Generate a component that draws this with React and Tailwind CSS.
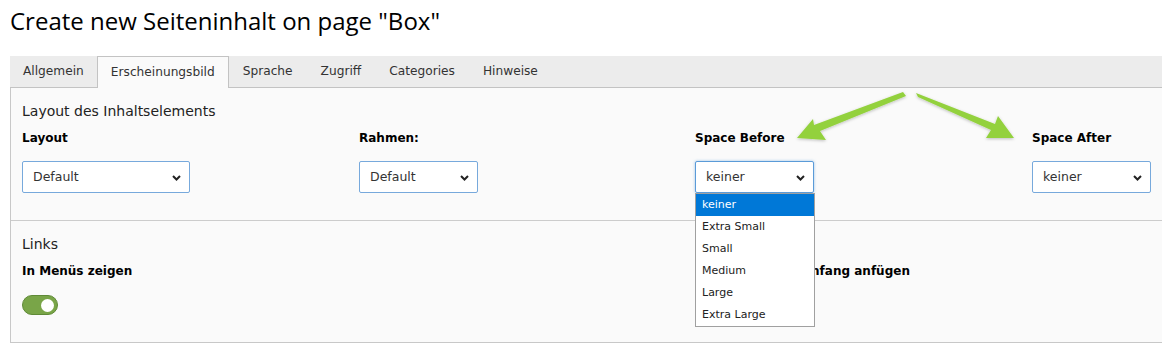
const tabs = ['Allgemein', 'Erscheinungsbild', 'Sprache', 'Zugriff', 'Categories', 'Hinweise']
const options = ['keiner', 'Extra Small', 'Small', 'Medium', 'Large', 'Extra Large']

function Chevron() {
  return (
    <svg width="9" height="6" viewBox="0 0 9 6" className="shrink-0">
      <path d="M1 1l3.5 3.5L8 1" fill="none" stroke="#222" strokeWidth="2" />
    </svg>
  )
}

function SelectBox({ value, width, focused }) {
  return (
    <div
      className={`flex h-[32px] items-center justify-between rounded-[2px] border bg-white pl-[10px] pr-[8px] pt-px text-[12.5px] text-[#333] ${width} ${
        focused ? 'border-[#5b9bd8] shadow-[0_0_3px_rgba(91,155,216,0.6)]' : 'border-[#77a9dc]'
      }`}
    >
      <span>{value}</span>
      <Chevron />
    </div>
  )
}

function Toggle() {
  return (
    <div className="flex h-[20px] w-[36px] items-center justify-end rounded-full border border-[#5f8a37] bg-[#79a548] pr-[3px]">
      <div className="h-[13px] w-[13px] rounded-full bg-white" />
    </div>
  )
}

function Field({ label, children }) {
  return (
    <div>
      <div className="text-[12px] font-bold leading-[16px] text-black">{label}</div>
      <div className="mt-[15px]">{children}</div>
    </div>
  )
}

function Arrows() {
  return (
    <svg className="pointer-events-none absolute left-0 top-0" width="1162" height="347">
      <defs>
        <filter id="sh" x="-20%" y="-20%" width="140%" height="140%">
          <feDropShadow dx="0" dy="1" stdDeviation="1.5" floodColor="#000" floodOpacity="0.25" />
        </filter>
      </defs>
      <g fill="#93d13e" filter="url(#sh)">
        <polygon points="903,92 814,125 813,119 797,138 826,140 820,131 906,96" />
        <polygon points="916,93 995,124 998,116 1014,138 986,138 991,130 918,97" />
      </g>
    </svg>
  )
}

export default function App() {
  return (
    <div className="relative h-[347px] w-[1162px] overflow-hidden bg-white" style={{ fontFamily: '"DejaVu Sans", Verdana, sans-serif' }}>
      <h1 className="h-[56px] pl-[10px] pt-[6px] text-[24px] leading-[30px] text-black" style={{ fontFamily: '"Open Sans", sans-serif' }}>
        Create new Seiteninhalt on page "Box"
      </h1>

      <div className="ml-[10px]">
        <div className="flex h-[32px] border-b border-[#c3c3c3] bg-[#ececec] text-[12.2px] text-[#333]">
          {tabs.map((t, i) =>
            i === 1 ? (
              <div key={t} className="-mb-px flex h-[32px] items-center border border-b-0 border-[#c3c3c3] bg-[#fafafa] px-[13px]">
                {t}
              </div>
            ) : (
              <div key={t} className={`flex items-center ${i === 0 ? 'px-[13px]' : 'px-[14px]'}`}>
                {t}
              </div>
            )
          )}
        </div>

        <div className="border-b border-l border-[#c8c8c8] bg-[#fafafa]">
          <div className="border-b border-[#cccccc] pb-[27px] pl-[11px] pt-[13px]">
            <div className="text-[14px] leading-[20px] text-[#222]">Layout des Inhaltselements</div>
            <div className="mt-[9px] grid grid-cols-[337px_336px_337px_337px]">
              <Field label="Layout">
                <SelectBox value="Default" width="w-[168px]" />
              </Field>
              <Field label="Rahmen:">
                <SelectBox value="Default" width="w-[119px]" />
              </Field>
              <Field label="Space Before">
                <SelectBox value="keiner" width="w-[119px]" focused />
              </Field>
              <Field label="Space After">
                <SelectBox value="keiner" width="w-[119px]" />
              </Field>
            </div>
          </div>

          <div className="pb-[27px] pl-[11px] pt-[13px]">
            <div className="text-[14px] leading-[20px] text-[#222]">Links</div>
            <div className="mt-[9px] grid grid-cols-[673px_337px]">
              <div>
                <div className="text-[12px] font-bold leading-[16px] text-black">In Menüs zeigen</div>
                <div className="mt-[16px]"><Toggle /></div>
              </div>
              <div>
                <div className="text-[12px] font-bold leading-[16px] text-black">Link zum Seitenanfang anfügen</div>
                <div className="mt-[16px]"><Toggle /></div>
              </div>
            </div>
          </div>
        </div>
      </div>

      <div className="absolute left-[695px] top-[193px] w-[120px] border border-[#a0a0a0] bg-white text-[11px] text-[#222]">
        {options.map((o, i) => (
          <div key={o} className={`flex h-[22px] items-center pl-[6px] pt-px ${i === 0 ? 'bg-[#0078d7] text-white' : ''}`}>
            {o}
          </div>
        ))}
      </div>

      <Arrows />
    </div>
  )
}
